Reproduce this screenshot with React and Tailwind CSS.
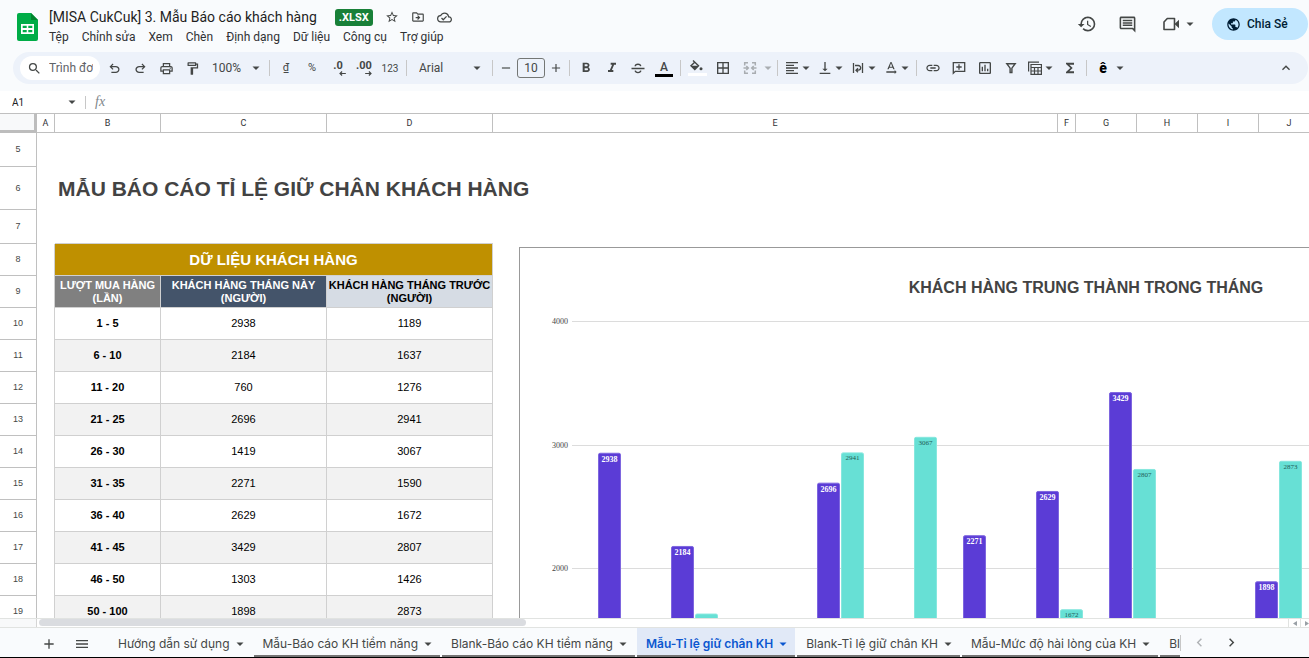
import React from "react";
import clsx from "clsx";
import {
  MdAdd,
  MdBorderAll,
  MdChevronLeft,
  MdChevronRight,
  MdFormatAlignLeft,
  MdFormatBold,
  MdFormatItalic,
  MdFunctions,
  MdHistory,
  MdInsertLink,
  MdKeyboardArrowUp,
  MdMenu,
  MdOutlineCloudDone,
  MdOutlineDriveFileMove,
  MdOutlineFormatPaint,
  MdOutlineInsertChart,
  MdOutlineInsertComment,
  MdOutlinePrint,
  MdPublic,
  MdRemove,
  MdSearch,
  MdStarBorder,
  MdTextRotationNone,
  MdVerticalAlignBottom,
} from "react-icons/md";

const menus = ["Tệp", "Chỉnh sửa", "Xem", "Chèn", "Định dạng", "Dữ liệu", "Công cụ", "Trợ giúp"];

const columns = [
  { name: "A", width: "w-[18px]" },
  { name: "B", width: "w-[106px]" },
  { name: "C", width: "w-[166px]" },
  { name: "D", width: "w-[166px]" },
  { name: "E", width: "w-[565px]" },
  { name: "F", width: "w-[18px]" },
  { name: "G", width: "w-[61px]" },
  { name: "H", width: "w-[61px]" },
  { name: "I", width: "w-[61px]" },
  { name: "J", width: "w-[61px]" },
];

const customers = [
  { range: "1 - 5", current: 2938, previous: 1189 },
  { range: "6 - 10", current: 2184, previous: 1637 },
  { range: "11 - 20", current: 760, previous: 1276 },
  { range: "21 - 25", current: 2696, previous: 2941 },
  { range: "26 - 30", current: 1419, previous: 3067 },
  { range: "31 - 35", current: 2271, previous: 1590 },
  { range: "36 - 40", current: 2629, previous: 1672 },
  { range: "41 - 45", current: 3429, previous: 2807 },
  { range: "46 - 50", current: 1303, previous: 1426 },
  { range: "50 - 100", current: 1898, previous: 2873 },
];

const sheets = [
  { name: "Hướng dẫn sử dụng", plain: true },
  { name: "Mẫu-Báo cáo KH tiềm năng" },
  { name: "Blank-Báo cáo KH tiềm năng" },
  { name: "Mẫu-Tỉ lệ giữ chân KH", active: true },
  { name: "Blank-Tỉ lệ giữ chân KH" },
  { name: "Mẫu-Mức độ hài lòng của KH" },
  { name: "Blank-Mức độ hài lòng của KH" },
];

function Caret() {
  return (
    <svg className="w-3 h-3 shrink-0" viewBox="0 0 12 12" fill="currentColor" aria-hidden="true">
      <path d="M2.5 4.5h7L6 8z" />
    </svg>
  );
}

function Separator() {
  return <span className="w-px h-4 mx-[3px] bg-[#c7c7c7] shrink-0" />;
}

function Tool({ label, children }) {
  return (
    <button aria-label={label} className="w-[26px] h-6 shrink-0 flex items-center justify-center">
      {children}
    </button>
  );
}

function DropTool({ label, wide, disabled, children }) {
  return (
    <button
      aria-label={label}
      disabled={disabled}
      className={clsx(
        "h-6 shrink-0 flex items-center",
        wide ? "w-[38px] pl-[6px] gap-1" : "w-[33px] pl-[3px]",
        disabled && "opacity-40"
      )}
    >
      {children}
      <Caret />
    </button>
  );
}

function SheetsLogo() {
  return (
    <svg className="w-[21px] h-7 shrink-0" viewBox="0 0 21 28" aria-hidden="true">
      <path d="M2 0h12l7 7v19a2 2 0 0 1-2 2H2a2 2 0 0 1-2-2V2a2 2 0 0 1 2-2z" fill="#00ac47" />
      <path d="M14 0l7 7h-7z" fill="#00832d" />
      <path
        d="M4 11h13v10H4zM5.7 12.7v2.4h4v-2.4zM11.3 12.7v2.4h4v-2.4zM5.7 16.9v2.4h4v-2.4zM11.3 16.9v2.4h4v-2.4z"
        fill="#fff"
        fillRule="evenodd"
      />
    </svg>
  );
}

function DecimalIcon({ digits, more }) {
  return (
    <span className="relative flex flex-col items-center w-4 h-4">
      <span className="text-[11px] leading-[11px] font-bold">{digits}</span>
      <svg className="absolute right-0 bottom-0 w-[7px] h-[5px]" viewBox="0 0 8 6" fill="none" stroke="currentColor" strokeWidth="1.4">
        {more ? <path d="M0 3h7M4.5 .6L7 3 4.5 5.4" /> : <path d="M8 3H1M3.5 .6L1 3l2.5 2.4" />}
      </svg>
    </span>
  );
}

function Header() {
  return (
    <div className="h-[52px] flex items-start justify-between">
      <div className="flex">
        <div className="pl-[17px] pt-[13px] pr-[11px]">
          <SheetsLogo />
        </div>
        <div className="pt-[7px]">
          <div className="h-5 flex items-center">
            <h1 className="text-sm leading-5 text-[#1f1f1f] whitespace-nowrap">
              [MISA CukCuk] 3. Mẫu Báo cáo khách hàng
            </h1>
            <span className="ml-[18px] h-[17px] px-1 rounded-[3px] bg-[#188038] text-white text-[11px] leading-[17px] font-bold">
              .XLSX
            </span>
            <div className="ml-3 flex gap-3 text-[#444746]">
              <button aria-label="Gắn dấu sao"><MdStarBorder size={14} /></button>
              <button aria-label="Di chuyển"><MdOutlineDriveFileMove size={14} /></button>
              <button aria-label="Trạng thái tài liệu"><MdOutlineCloudDone size={15} /></button>
            </div>
          </div>
          <nav className="flex gap-[13px] pt-0.5 text-xs leading-4 text-[#303134] whitespace-nowrap">
            {menus.map((menu) => (
              <button key={menu}>{menu}</button>
            ))}
          </nav>
        </div>
      </div>

      <div className="flex items-center pt-2 pr-px text-[#444746]">
        <button aria-label="Nhật ký phiên bản" className="mr-[21px]"><MdHistory size={20} /></button>
        <button aria-label="Nhận xét" className="mr-[25px]"><MdOutlineInsertComment size={19} /></button>
        <button aria-label="Cuộc gọi" className="flex items-center gap-1 mr-4">
          <svg className="w-[18px] h-[18px]" viewBox="0 0 18 18" fill="none" stroke="currentColor" strokeWidth="1.6">
            <path d="M5.3 3.5h7.2v11H2V7z" strokeLinejoin="round" />
            <path d="M13 8.500l4-3.700v8.400l-4-3.700z" fill="currentColor" stroke="none" />
          </svg>
          <Caret />
        </button>
        <button className="h-8 w-24 rounded-full bg-[#c2e7ff] text-[#001d35] flex items-center gap-[6px] pl-[14px] text-xs font-medium">
          <MdPublic size={15} />
          Chia Sẻ
        </button>
      </div>
    </div>
  );
}

function Toolbar() {
  return (
    <div className="h-8 ml-[13px] mr-px rounded-full bg-[#edf2fa] flex items-center text-[#444746]">
      <label className="ml-[7px] mr-px w-20 h-6 rounded-full bg-white flex items-center pl-[7px] gap-[7px] shrink-0">
        <MdSearch size={15} className="shrink-0" />
        <input
          aria-label="Tìm trong trình đơn"
          placeholder="Trình đơn"
          className="w-11 text-xs outline-none placeholder:text-[#5f6368] placeholder:opacity-100"
        />
      </label>
      <Tool label="Hủy">
        <svg width="15" height="15" viewBox="0 -960 960 960" fill="currentColor">
          <path d="M280-200v-80h284q63 0 109.500-40T720-420q0-60-46.500-100T564-560H312l104 104-56 56-200-200 200-200 56 56-104 104h252q97 0 169.500 63T800-420q0 94-72.500 157T564-200H280Z" />
        </svg>
      </Tool>
      <Tool label="Làm lại">
        <svg width="15" height="15" viewBox="0 -960 960 960" fill="currentColor">
          <path d="M396-200q-97 0-169.500-63T154-420q0-94 72.500-157T396-640h252L544-744l56-56 200 200-200 200-56-56 104-104H396q-63 0-109.500 40T240-420q0 60 46.500 100T396-280h284v80H396Z" />
        </svg>
      </Tool>
      <Tool label="In"><MdOutlinePrint size={15} /></Tool>
      <Tool label="Sao chép định dạng"><MdOutlineFormatPaint size={15} /></Tool>
      <label className="w-[61px] h-6 pl-[7px] pr-1 flex items-center shrink-0">
        <select aria-label="Thu phóng" className="flex-1 min-w-0 appearance-none text-xs outline-none">
          <option>100%</option>
        </select>
        <Caret />
      </label>
      <Separator />
      <Tool label="Tiền tệ"><span className="text-[11px]">₫</span></Tool>
      <Tool label="Phần trăm"><span className="text-[11px]">%</span></Tool>
      <Tool label="Giảm số thập phân"><DecimalIcon digits=".0" /></Tool>
      <Tool label="Tăng số thập phân"><DecimalIcon digits=".00" more /></Tool>
      <Tool label="Định dạng khác"><span className="text-[10px]">123</span></Tool>
      <Separator />
      <label className="w-[79px] h-6 pl-[9px] pr-[6px] flex items-center shrink-0">
        <select aria-label="Phông chữ" className="flex-1 min-w-0 appearance-none text-xs outline-none">
          <option>Arial</option>
        </select>
        <Caret />
      </label>
      <Separator />
      <div className="flex items-center shrink-0">
        <button aria-label="Giảm cỡ chữ" className="w-5 flex justify-center"><MdRemove size={14} /></button>
        <input
          aria-label="Cỡ chữ"
          defaultValue="10"
          className="w-7 h-5 mx-px rounded-[3px] border border-[#747775] text-center text-xs outline-none"
        />
        <button aria-label="Tăng cỡ chữ" className="w-5 flex justify-center"><MdAdd size={14} /></button>
      </div>
      <Separator />
      <Tool label="Đậm"><MdFormatBold size={16} /></Tool>
      <Tool label="Nghiêng"><MdFormatItalic size={16} /></Tool>
      <Tool label="Gạch ngang">
        <svg className="w-[14px] h-4" viewBox="0 0 14 16" fill="none" stroke="currentColor" strokeWidth="1.400">
          <path d="M.5 8.500h13M9.800 6.200C9.500 5 8.500 4.300 7 4.300S4.300 5 4.200 6.200M4.200 10.700c.2 1.200 1.300 1.900 2.800 1.900s2.600-.7 2.800-1.900" />
        </svg>
      </Tool>
      <Tool label="Màu văn bản">
        <span className="w-[18px] pt-px border-b-[3px] border-black text-xs leading-[13px] font-medium text-center">A</span>
      </Tool>
      <Separator />
      <Tool label="Màu nền">
        <svg className="w-[19px] h-4" viewBox="0 0 19 16" fill="none" stroke="currentColor" strokeWidth="1.4">
          <path d="M5 .5l5.500 5.200-3.700 3.700L3 5.700l3.700-3.500" />
          <path d="M3 5.700h7.500L6.800 9.400z" fill="currentColor" stroke="none" />
          <circle cx="13" cy="8.800" r="1.500" fill="currentColor" stroke="none" />
          <path d="M0 14.500h19" stroke="#fff" strokeWidth="3" />
        </svg>
      </Tool>
      <Tool label="Đường viền"><MdBorderAll size={16} /></Tool>
      <DropTool label="Hợp nhất ô" wide disabled>
        <svg className="w-4 h-4" viewBox="0 0 16 16" fill="none" stroke="currentColor" strokeWidth="1.500">
          <path d="M6 2.700H2.700V5.500M10 2.700h3.300V5.500M6 13.300H2.700v-2.800M10 13.300h3.300v-2.800" />
          <path d="M1.500 8h4.500M4.300 6L6.300 8l-2 2M14.500 8H10M11.700 6l-2 2 2 2" />
        </svg>
      </DropTool>
      <Separator />
      <DropTool label="Căn ngang"><MdFormatAlignLeft size={16} /></DropTool>
      <DropTool label="Căn dọc"><MdVerticalAlignBottom size={16} /></DropTool>
      <DropTool label="Xuống dòng">
        <svg className="w-4 h-4" viewBox="0 0 16 16" fill="none" stroke="currentColor" strokeWidth="1.300">
          <path d="M3.500 3v10M12.500 3v10M5 5.500h3.300a2.200 2.200 0 0 1 0 4.700H6M8 8.200l-2 2 2 2" />
        </svg>
      </DropTool>
      <DropTool label="Xoay văn bản"><MdTextRotationNone size={16} /></DropTool>
      <Separator />
      <Tool label="Chèn đường liên kết"><MdInsertLink size={16} /></Tool>
      <Tool label="Chèn nhận xét">
        <svg className="w-4 h-4" viewBox="0 0 16 16" fill="none" stroke="currentColor" strokeWidth="1.300">
          <path d="M2.300 13.300V2.700h11.400v8.600H4.300zM8 4.300v5.400M5.300 7h5.400" />
        </svg>
      </Tool>
      <Tool label="Chèn biểu đồ"><MdOutlineInsertChart size={16} /></Tool>
      <Tool label="Tạo bộ lọc">
        <svg className="w-4 h-4" viewBox="0 0 16 16" fill="none" stroke="currentColor" strokeWidth="1.400">
          <path d="M3.800 3.700h8.400L8.900 8.200v4.300H7.100V8.200z" />
        </svg>
      </Tool>
      <DropTool label="Chế độ xem bảng">
        <svg className="w-4 h-4" viewBox="0 0 16 16" fill="none" stroke="currentColor" strokeWidth="1.200">
          <path d="M1.600 11.500V2.100H12" />
          <path d="M4 4.500h10.400v9.900H4zM4 7.500h10.400M4 11h10.400M7.500 7.500v6.900M11 7.500v6.900" />
        </svg>
      </DropTool>
      <Tool label="Hàm"><MdFunctions size={16} /></Tool>
      <Separator />
      <DropTool label="Công cụ nhập liệu" wide>
        <span className="w-[14px] text-center text-sm leading-4 font-black text-black">ê</span>
      </DropTool>
      <div className="flex-1" />
      <button aria-label="Ẩn trình đơn" className="mr-[14px]"><MdKeyboardArrowUp size={16} /></button>
    </div>
  );
}

function FormulaBar() {
  return (
    <div className="h-[22px] flex items-center bg-white text-[#444746] shrink-0">
      <input aria-label="Hộp tên" defaultValue="A1" className="w-[66px] pl-3 text-[10px] text-[#202124] outline-none" />
      <Caret />
      <span className="w-px h-[13px] ml-[7px] bg-[#c7c7c7]" />
      <span className="ml-[9px] text-sm leading-4 italic font-[Liberation_Serif,serif] text-[#80868b]">fx</span>
      <input aria-label="Thanh công thức" className="flex-1 ml-2 text-xs outline-none" />
    </div>
  );
}

// short bars carry no data label
const LABEL_MIN = 1600;

// pixel y of a value on the vertical axis
const valueY = (value) => 73.5 + (4000 - value) * 0.1236;

function Bar({ x, value, fill, edge, textFill, bold }) {
  const top = valueY(value);
  return (
    <g>
      <rect x={x + 0.5} y={top + 0.5} width="22" height={valueY(0) - top} rx="1.500" fill={fill} stroke={edge} />
      {value >= LABEL_MIN && (
        <text
          x={x + 11.5}
          y={bold ? top + 9 : top + 8}
          textAnchor="middle"
          fill={textFill}
          fontSize={bold ? 8 : 7}
          fontWeight={bold ? 700 : 400}
        >
          {value}
        </text>
      )}
    </g>
  );
}

function RetentionChart() {
  return (
    <figure className="absolute left-[519px] top-[134px] w-[1134px] h-[720px] bg-white border border-[#999999]">
      <figcaption className="absolute inset-x-0 top-7 text-center text-base leading-6 font-bold text-[#434343] font-[Liberation_Sans,Arial,sans-serif]">
        KHÁCH HÀNG TRUNG THÀNH TRONG THÁNG
      </figcaption>
      <svg className="w-full h-full font-[Liberation_Serif,serif]" viewBox="0 0 1132 718">
        {[4000, 3000, 2000].map((value) => (
          <g key={value}>
            <path d={`M52 ${Math.floor(valueY(value)) + 0.5}H1090`} stroke="#dcdcdc" />
            <text x="48" y={valueY(value) + 2.5} textAnchor="end" fontSize="8" fill="#444444">
              {value}
            </text>
          </g>
        ))}
        {customers.map((item, i) => (
          <g key={item.range}>
            <Bar x={78 + i * 73} value={item.current} fill="#5b3cd6" edge="#7e66df" textFill="#ffffff" bold />
            <Bar x={102 + i * 73} value={item.previous} fill="#67e0d5" edge="#86e7de" textFill="#1f5c57" />
          </g>
        ))}
      </svg>
    </figure>
  );
}

function RowHeader({ children }) {
  return (
    <th className="border-r border-b border-[#c0c0c0] bg-white text-[9px] font-normal text-[#444746]">
      {children}
    </th>
  );
}

function Sheet() {
  const cell = "border-r border-b border-[#d0d0d0]";
  return (
    <main className="relative flex-1 min-h-0 overflow-hidden bg-white">
      <table className="table-fixed w-full border-separate border-spacing-0 text-center">
        <colgroup>
          <col className="w-[37px]" />
          {columns.map((col) => (
            <col key={col.name} className={col.width} />
          ))}
        </colgroup>
        <thead>
          <tr className="h-5 text-[9px] text-[#303134]">
            <td className="p-0 border-t border-t-[#c0c0c0] border-r-[3px] border-b-[3px] border-r-[#bdbdbd] border-b-[#bdbdbd] bg-[#f8f9fa]" />
            {columns.map((col) => (
              <th key={col.name} className="p-0 pt-px border-t border-r border-b border-[#c0c0c0] font-normal">
                {col.name}
              </th>
            ))}
          </tr>
        </thead>
        <tbody className="font-[Liberation_Sans,Arial,sans-serif] text-[11px] leading-[13px] text-black">
          <tr className="h-[34px]">
            <RowHeader>5</RowHeader>
            <td colSpan={10} />
          </tr>
          <tr className="h-[43px]">
            <RowHeader>6</RowHeader>
            <td />
            <td colSpan={9} className="p-0 pl-[3px] text-left">
              <h2 className="text-[21px] leading-6 font-bold text-[#434343]">MẪU BÁO CÁO TỈ LỆ GIỮ CHÂN KHÁCH HÀNG</h2>
            </td>
          </tr>
          <tr className="h-[34px]">
            <RowHeader>7</RowHeader>
            <td />
            <td colSpan={3} className="border-b border-[#d0d0d0]" />
            <td colSpan={6} />
          </tr>
          <tr className="h-8">
            <RowHeader>8</RowHeader>
            <td className="border-r border-[#d0d0d0]" />
            <th colSpan={3} className={clsx(cell, "p-0 bg-[#bf9000] text-white text-[15px] leading-5")}>
              DỮ LIỆU KHÁCH HÀNG
            </th>
          </tr>
          <tr className="h-8">
            <RowHeader>9</RowHeader>
            <td className="border-r border-[#d0d0d0]" />
            <th className={clsx(cell, "p-0 bg-[#808080] text-white")}>LƯỢT MUA HÀNG<br />(LẦN)</th>
            <th className={clsx(cell, "p-0 bg-[#44546a] text-white")}>KHÁCH HÀNG THÁNG NÀY<br />(NGƯỜI)</th>
            <th className={clsx(cell, "p-0 bg-[#d6dce4] whitespace-nowrap")}>KHÁCH HÀNG THÁNG TRƯỚC<br />(NGƯỜI)</th>
          </tr>
          {customers.map((item, i) => (
            <tr key={item.range} className="h-8">
              <RowHeader>{i + 10}</RowHeader>
              <td className="border-r border-[#d0d0d0]" />
              <th className={clsx(cell, "p-0", i % 2 === 1 && "bg-[#f2f2f2]")}>{item.range}</th>
              <td className={clsx(cell, "p-0", i % 2 === 1 && "bg-[#f2f2f2]")}>{item.current}</td>
              <td className={clsx(cell, "p-0", i % 2 === 1 && "bg-[#f2f2f2]")}>{item.previous}</td>
            </tr>
          ))}
        </tbody>
      </table>
      <RetentionChart />
    </main>
  );
}

function ScrollTrack() {
  return (
    <div className="h-[10px] shrink-0 flex border-y border-[#e1e3e1] bg-white text-[#9aa0a6]">
      <div className="w-[37px] border-r border-[#d5d5d5] bg-[#f8f9fa]" />
      <div className="flex-1 pl-0.5">
        <div className="w-[39%] h-[7px] rounded-full bg-[#dadce0]" />
      </div>
      <button aria-label="Cuộn trái" className="w-3 border-l border-[#e1e3e1] flex items-center justify-center">
        <svg width="4" height="5" viewBox="0 0 4 5" fill="currentColor"><path d="M4 0v5L0 2.500z" /></svg>
      </button>
      <button aria-label="Cuộn phải" className="w-[9px] border-l border-[#e1e3e1] flex items-center justify-end">
        <svg width="4" height="5" viewBox="0 0 4 5" fill="currentColor"><path d="M0 0v5l4-2.500z" /></svg>
      </button>
    </div>
  );
}

function SheetTabs() {
  return (
    <footer className="h-[30px] shrink-0 flex bg-[#f9fbfd] border-b border-black text-[#444746]">
      <div className="w-[109px] pl-[41px] pt-0.5 flex items-center gap-[17px] shrink-0">
        <button aria-label="Thêm trang tính"><MdAdd size={16} /></button>
        <button aria-label="Tất cả trang tính"><MdMenu size={16} /></button>
      </div>
      <div className="flex-1 min-w-0 flex gap-0.5 overflow-hidden">
        {sheets.map((sheet) => (
          <button
            key={sheet.name}
            className={clsx(
              "shrink-0 flex items-center gap-1 pl-[9px] pr-[6px] pt-1 border-b-2 text-xs whitespace-nowrap font-[Inter,sans-serif]",
              sheet.active ? "bg-[#e1e9f7] text-[#0b57d0] font-semibold" : "font-normal",
              sheet.plain ? "border-transparent" : "border-[#757575]"
            )}
          >
            {sheet.name}
            <Caret />
          </button>
        ))}
      </div>
      <div className="w-[129px] shrink-0 flex items-center">
        <span className="w-px h-4 bg-[#c7c7c7]" />
        <button aria-label="Trang tính trước" className="ml-[10px] text-[#b0b3b6]"><MdChevronLeft size={17} /></button>
        <button aria-label="Trang tính sau" className="ml-[15px]"><MdChevronRight size={17} /></button>
      </div>
    </footer>
  );
}

function App() {
  return (
    <div className="h-screen flex flex-col overflow-hidden bg-white font-[Roboto,sans-serif]">
      <header className="bg-[#f9fbfd] pb-[7px] shrink-0">
        <Header />
        <Toolbar />
      </header>
      <FormulaBar />
      <Sheet />
      <ScrollTrack />
      <SheetTabs />
    </div>
  );
}

export default App;
